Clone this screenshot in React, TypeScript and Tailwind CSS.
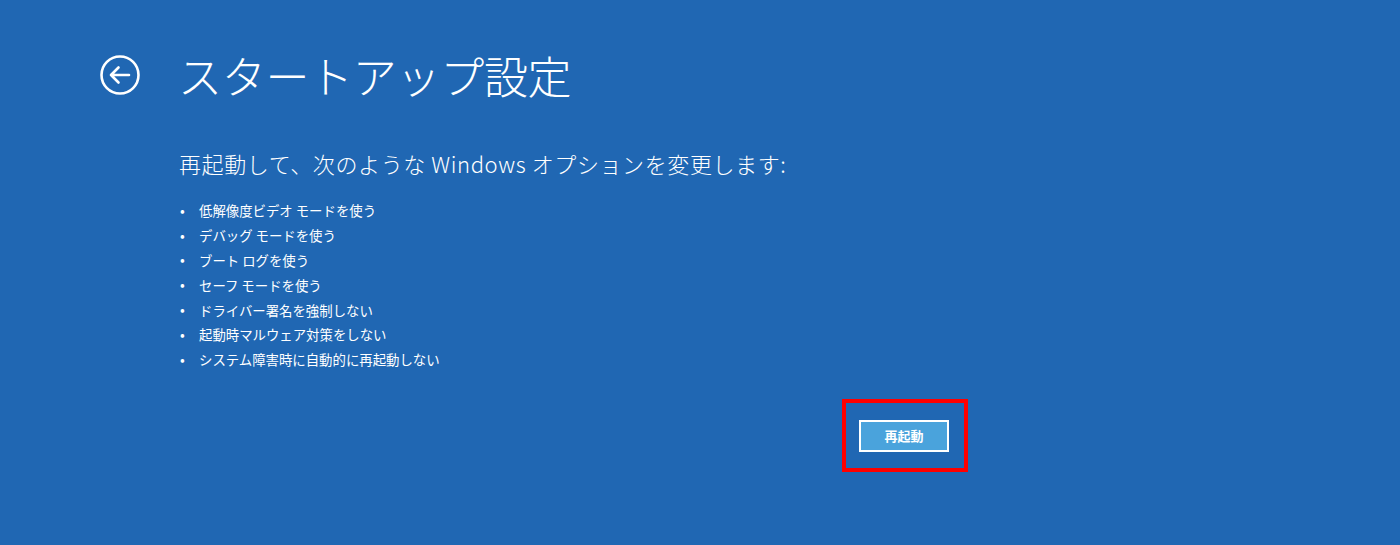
import React from 'react';

const options = [
  '低解像度ビデオ モードを使う',
  'デバッグ モードを使う',
  'ブート ログを使う',
  'セーフ モードを使う',
  'ドライバー署名を強制しない',
  '起動時マルウェア対策をしない',
  'システム障害時に自動的に再起動しない',
];

const BackIcon: React.FC = () => (
  <svg width="42" height="42" viewBox="0 0 42 42" fill="none" stroke="white" strokeWidth="2.6">
    <circle cx="21" cy="21" r="18.5" />
    <path d="M30 21H12M19.5 13.5L12 21l7.5 7.5" strokeLinecap="round" strokeLinejoin="round" />
  </svg>
);

export default function App() {
  return (
    <div
      className="w-[1400px] h-[545px] bg-[#2067b3] text-white overflow-hidden"
      style={{ fontFamily: '"Noto Sans CJK JP", "Noto Sans", sans-serif' }}
    >
      <div className="flex items-center pt-[40px] pl-[99px]">
        <BackIcon />
        <h1 className="ml-[37px] text-[44px] font-light leading-[70px] tracking-[-0.3px]">スタートアップ設定</h1>
      </div>

      <div className="pl-[179px] pt-[38px]">
        <p className="text-[22px] font-light leading-[30px] tracking-[0.6px]">再起動して、次のような Windows オプションを変更します:</p>

        <ul className="mt-[20px] flex flex-col">
          {options.map((o) => (
            <li key={o} className="flex items-center h-[24.8px] text-[13.4px]">
              <span className="w-[20px] pl-[1px] text-[14px]">•</span>
              <span>{o}</span>
            </li>
          ))}
        </ul>

        <div className="flex pl-[663px] mt-[27px]">
          <div className="border-4 border-[#ff0000] w-[126px] h-[73px] flex items-center justify-center">
            <button className="w-[90px] h-[32px] mt-[2px] mr-[2px] bg-[#4aa3dc] border-2 border-white text-[13px] font-bold">
              再起動
            </button>
          </div>
        </div>
      </div>
    </div>
  );
}
